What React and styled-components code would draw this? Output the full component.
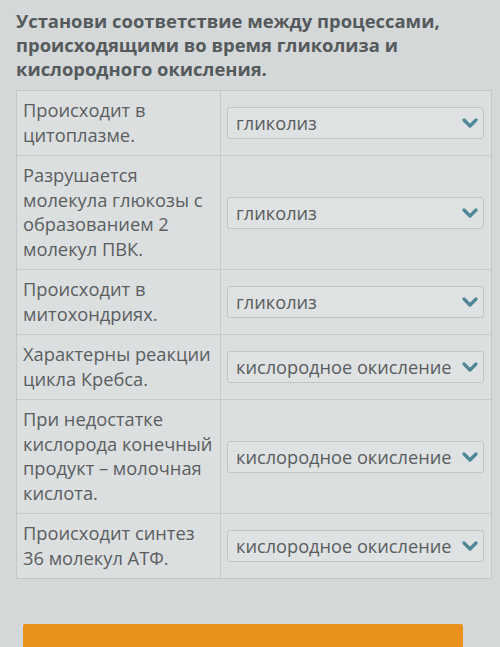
import React from "react";
import styled, { createGlobalStyle } from "styled-components";

const rows = [
  { text: "Происходит в цитоплазме.", value: "гликолиз" },
  { text: "Разрушается молекула глюкозы с образованием 2 молекул ПВК.", value: "гликолиз" },
  { text: "Происходит в митохондриях.", value: "гликолиз" },
  { text: "Характерны реакции цикла Кребса.", value: "кислородное окисление" },
  { text: "При недостатке кислорода конечный продукт – молочная кислота.", value: "кислородное окисление" },
  { text: "Происходит синтез 36 молекул АТФ.", value: "кислородное окисление" },
];

function Chevron() {
  return (
    <svg width="16" height="12" viewBox="0 0 16 12">
      <path
        d="M2 3l6 6 6-6"
        fill="none"
        stroke="#4f8797"
        strokeWidth="3.2"
        strokeLinecap="round"
        strokeLinejoin="round"
      />
    </svg>
  );
}

export default function App() {
  return (
    <>
      <GlobalStyle />
      <Page>
        <Title>
          Установи соответствие между процессами, происходящими во время
          гликолиза и кислородного окисления.
        </Title>
        <Table>
          {rows.map((row, i) => (
            <Row key={i} last={i === rows.length - 1}>
              <Question>{row.text}</Question>
              <Answer>
                <Select>
                  <span>{row.value}</span>
                  <Chevron />
                </Select>
              </Answer>
            </Row>
          ))}
        </Table>
        <CheckButton />
      </Page>
    </>
  );
}

const GlobalStyle = createGlobalStyle`
  html, body {
    margin: 0;
    padding: 0;
    background: #d4d8d9;
  }
  body {
    font-family: "Open Sans", "Noto Sans", sans-serif;
  }
`;

const Page = styled.div`
  width: 500px;
  height: 647px;
  overflow: hidden;
  box-sizing: border-box;
  padding: 9px 8px 0 16px;
  background: #d4d8d9;
`;

const Title = styled.h1`
  margin: 0 0 9px 0;
  width: 450px;
  font-size: 18.4px;
  line-height: 24px;
  font-weight: 700;
  color: #555a5c;
`;

const Table = styled.div`
  width: 474px;
  border: 1px solid #c3c7c8;
  background: #dcdfe0;
`;

const Row = styled.div`
  display: grid;
  grid-template-columns: 204px 1fr;
  border-bottom: ${(p) => (p.last ? "none" : "1px solid #c6cacb")};
`;

const Question = styled.div`
  padding: 7px 4px 8px 6px;
  font-size: 18.3px;
  line-height: 24.5px;
  color: #5a5e60;
  border-right: 1px solid #c6cacb;
`;

const Answer = styled.div`
  display: flex;
  align-items: center;
  padding: 0 7px 0 6px;
`;

const Select = styled.div`
  flex: 1;
  height: 32px;
  box-sizing: border-box;
  display: flex;
  align-items: center;
  justify-content: space-between;
  padding: 0 5px 0 8px;
  border: 1px solid #c0c5c6;
  border-radius: 3px;
  background: #dfe2e2;
  font-size: 18.2px;
  color: #595d5f;
  white-space: nowrap;

  span {
    overflow: hidden;
  }

  svg {
    flex-shrink: 0;
    margin-left: 1px;
  }
`;

const CheckButton = styled.div`
  margin: 45px 0 0 7px;
  width: 440px;
  height: 40px;
  background: #e9911b;
  border-radius: 2px;
`;
